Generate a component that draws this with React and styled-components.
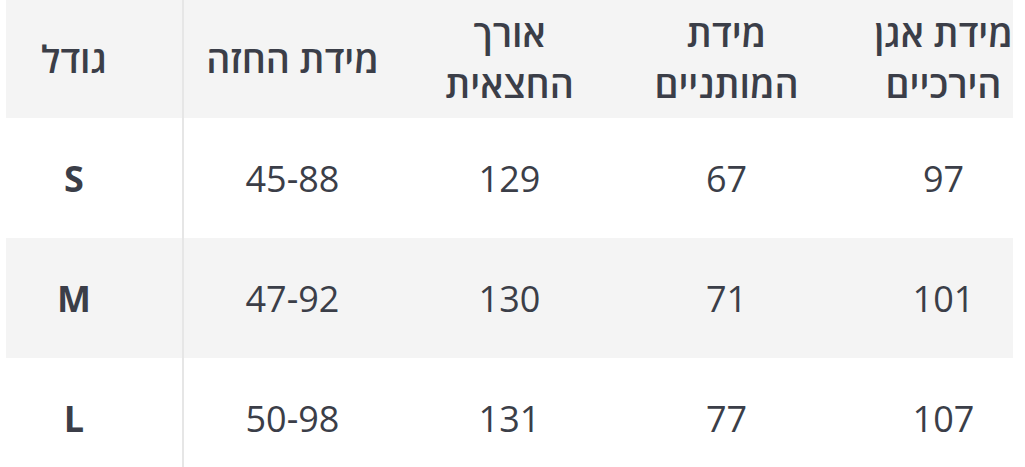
import styled, { createGlobalStyle } from "styled-components";

const GlobalStyle = createGlobalStyle`
  body {
    margin: 0;
    background: #ffffff;
    font-family: "Open Sans", "DejaVu Sans", sans-serif;
  }
`;

const headers = ["גודל", "מידת החזה", "אורך החצאית", "מידת המותניים", "מידת אגן הירכיים"];

const rows = [
  ["S", "45-88", "129", "67", "97"],
  ["M", "47-92", "130", "71", "101"],
  ["L", "50-98", "131", "77", "107"],
];

const App = () => {
  return (
    <>
      <GlobalStyle />
      <Frame>
        <SizeTable>
          <Row $shaded $head>
            {headers.map((h, i) => (
              <HeadCell key={h} $first={i === 0}>
                {h}
              </HeadCell>
            ))}
          </Row>
          {rows.map((r, ri) => (
            <Row key={r[0]} $shaded={ri % 2 === 1}>
              {r.map((v, i) => (
                <Cell key={i} $first={i === 0}>
                  {v}
                </Cell>
              ))}
            </Row>
          ))}
        </SizeTable>
      </Frame>
    </>
  );
};

const Frame = styled.div`
  width: 1007px;
  height: 467px;
  margin-left: 6px;
  overflow: hidden;
`;

const SizeTable = styled.div`
  width: 1045px;
  direction: ltr;
`;

const Row = styled.div`
  display: grid;
  grid-template-columns: 178px repeat(4, 217px);
  height: ${(p) => (p.$head ? "118px" : "120px")};
  background-color: ${(p) => (p.$shaded ? "#f4f4f4" : "#ffffff")};
`;

const Cell = styled.div`
  display: flex;
  align-items: center;
  justify-content: center;
  padding: ${(p) => (p.$first ? "0 40px 0 0" : "0 10px")};
  text-align: center;
  color: #3b3e48;
  font-size: 36px;
  font-weight: ${(p) => (p.$first ? 700 : 400)};
  border-right: ${(p) => (p.$first ? "2px solid #e6e6e6" : "0")};
`;

const HeadCell = styled(Cell)`
  direction: rtl;
  font-size: 37.5px;
  font-weight: 600;
  line-height: 51px;
  padding-bottom: 2px;
`;

export default App;
